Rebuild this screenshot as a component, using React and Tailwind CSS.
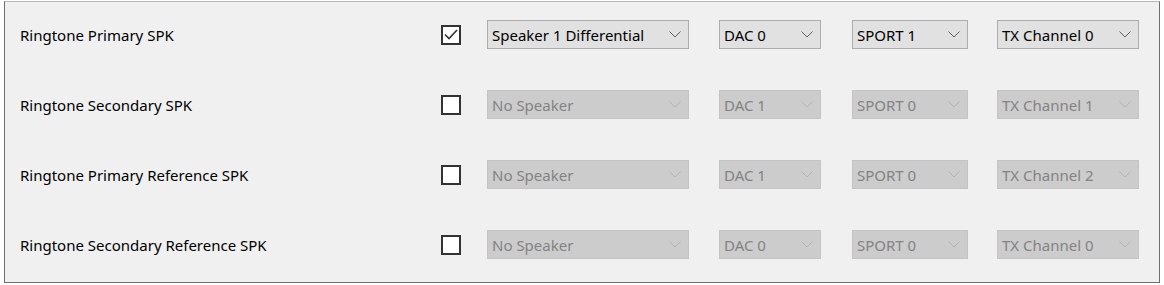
const rows = [
  { label: "Ringtone Primary SPK", checked: true, spk: "Speaker 1 Differential", dac: "DAC 0", sport: "SPORT 1", tx: "TX Channel 0" },
  { label: "Ringtone Secondary SPK", checked: false, spk: "No Speaker", dac: "DAC 1", sport: "SPORT 0", tx: "TX Channel 1" },
  { label: "Ringtone Primary Reference SPK", checked: false, spk: "No Speaker", dac: "DAC 1", sport: "SPORT 0", tx: "TX Channel 2" },
  { label: "Ringtone Secondary Reference SPK", checked: false, spk: "No Speaker", dac: "DAC 0", sport: "SPORT 0", tx: "TX Channel 0" },
];

function Chevron({ enabled }) {
  return (
    <svg width="12" height="7" viewBox="0 0 12 7" className="shrink-0">
      <path d="M0.5 0.5 L6 6 L11.5 0.5" fill="none" stroke={enabled ? "#606060" : "#b4b4b4"} strokeWidth="1" />
    </svg>
  );
}

function Combo({ value, enabled, width }) {
  return (
    <div
      className={`${width} h-[29px] flex items-center justify-between pl-[4px] pr-[7px] border ${
        enabled ? "bg-[#e1e1e1] border-[#adadad] text-black" : "bg-[#cccccc] border-[#c4c4c4] text-[#838383]"
      }`}
    >
      <span className="whitespace-nowrap pt-[1px]">{value}</span>
      <Chevron enabled={enabled} />
    </div>
  );
}

function Check({ checked }) {
  return (
    <div className="w-[20px] h-[20px] border-2 border-[#333333] bg-white flex items-center justify-center">
      {checked && (
        <svg width="14" height="11" viewBox="0 0 14 11">
          <path d="M1 5.5 L5 9.5 L13 1" fill="none" stroke="#333333" strokeWidth="1.6" />
        </svg>
      )}
    </div>
  );
}

export default function App() {
  return (
    <div className="w-[1164px] h-[285px] bg-white pl-[4px] pt-[1px]" style={{ fontFamily: '"Noto Sans", "Liberation Sans", sans-serif' }}>
      <div className="w-[1156px] border border-[#6e6e6e] border-t-[#b9b9b9] bg-[#f0f0f0] pt-[18px] pb-[23px] pl-[15px] flex flex-col gap-[41px] text-[15px]">
        {rows.map((r, i) => (
          <div key={i} className="h-[29px] flex items-center">
            <div className="w-[421px] text-black whitespace-nowrap pt-[1px]">{r.label}</div>
            <Check checked={r.checked} />
            <div className="ml-[26px]">
              <Combo value={r.spk} enabled={r.checked} width="w-[202px]" />
            </div>
            <div className="ml-[30px]">
              <Combo value={r.dac} enabled={r.checked} width="w-[102px]" />
            </div>
            <div className="ml-[31px]">
              <Combo value={r.sport} enabled={r.checked} width="w-[116px]" />
            </div>
            <div className="ml-[29px]">
              <Combo value={r.tx} enabled={r.checked} width="w-[142px]" />
            </div>
          </div>
        ))}
      </div>
    </div>
  );
}
